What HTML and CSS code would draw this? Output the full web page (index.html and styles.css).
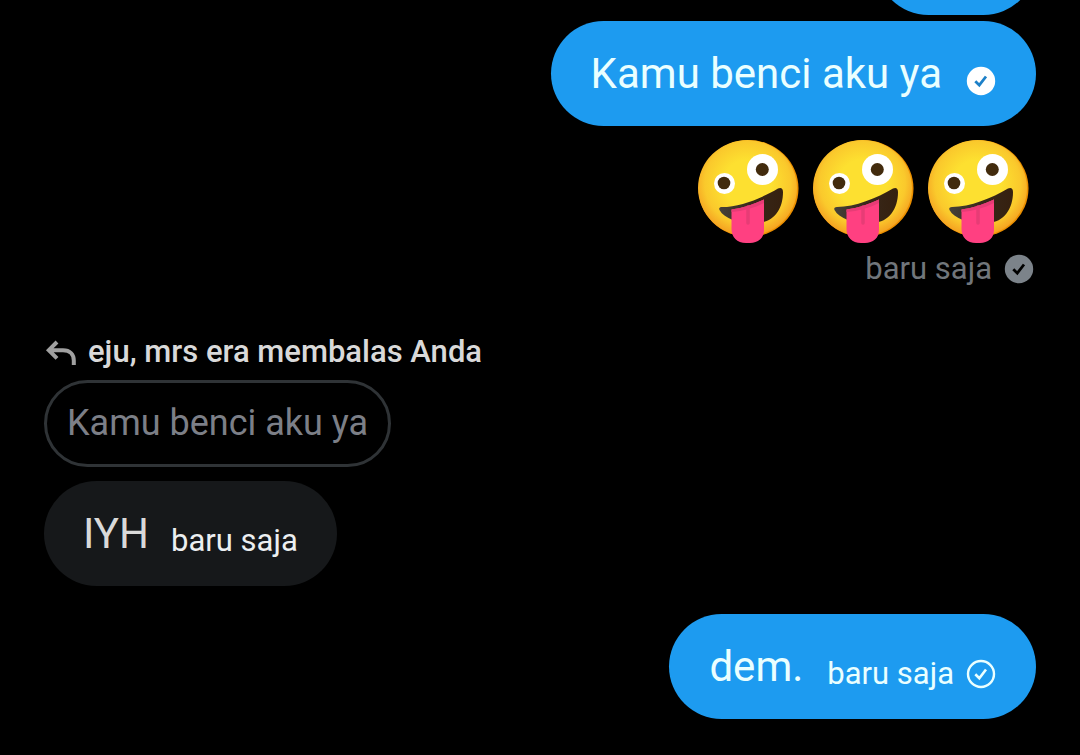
FILE: index.html
```html
<!DOCTYPE html>
<html lang="id">
<head>
<meta charset="utf-8">
<meta name="viewport" content="width=device-width, initial-scale=1">
<title>Pesan</title>
<link rel="stylesheet" href="styles.css">
</head>
<body>
<svg class="defs" aria-hidden="true">
  <defs>
    <radialGradient id="skin" cx="50%" cy="45%" r="54%">
      <stop offset="0.45" stop-color="#fde030"/>
      <stop offset="0.8" stop-color="#fac92c"/>
      <stop offset="1" stop-color="#f5a422"/>
    </radialGradient>
    <linearGradient id="mouth-fill" x1="0" x2="1">
      <stop offset="0" stop-color="#45413a"/>
      <stop offset="0.5" stop-color="#38281a"/>
      <stop offset="1" stop-color="#35200f"/>
    </linearGradient>
    <symbol id="zany" viewBox="0 0 101 103">
      <ellipse cx="50.5" cy="48.5" rx="50" ry="48.5" fill="#eb8f00"/>
      <ellipse cx="49.5" cy="48" rx="49.5" ry="48" fill="url(#skin)"/>
      <circle cx="26.5" cy="43.5" r="10.5" fill="#fff"/>
      <circle cx="26" cy="43" r="6.3" fill="#422b0d"/>
      <circle cx="64.5" cy="29.5" r="15.5" fill="#fff"/>
      <circle cx="64.3" cy="29.5" r="6.5" fill="#422b0d"/>
      <path d="M24 67C42 67 64 58 80 48.5C83 47 85 48.5 85 52C85 69 76 82 60 83C44 84 27 80 21.5 70C20.5 68 22 67 24 67Z" fill="url(#mouth-fill)"/>
      <path d="M33.5 69.5C45 68 56 64 66 59.5V90C66 98 60 103 52 103H48C39 103 33.5 97 33.5 89Z" fill="#ff4081"/>
      <path d="M33.5 69.5C45 68 56 64 66 59.5V63C56 68 45 71 33.5 72Z" fill="#e73c76"/>
      <path d="M50 67V83" stroke="#e73c76" stroke-width="3.5" stroke-linecap="round"/>
    </symbol>
  </defs>
</svg>
<main class="chat">
  <div class="cutoff"><div class="bubble sent short"></div></div>

  <div class="bubble sent">
    <p class="text">Kamu benci aku ya</p>
    <span class="meta"><svg class="tick" viewBox="0 0 30 30" role="img" aria-label="Terkirim"><circle cx="15" cy="15" r="14.2" fill="#fff"/><path d="M9.3 15.3L13.3 19.2L20 10.5" fill="none" stroke="#1d80c8" stroke-width="2.8"/></svg></span>
  </div>

  <div class="emojis" role="img" aria-label="Tiga wajah konyol">
    <svg class="emoji"><use href="#zany"/></svg>
    <svg class="emoji"><use href="#zany"/></svg>
    <svg class="emoji"><use href="#zany"/></svg>
  </div>
  <div class="status">
    <span>baru saja</span>
    <svg class="tick" viewBox="0 0 30 30" role="img" aria-label="Terkirim"><circle cx="15" cy="15" r="14.2" fill="#7c838a"/><path d="M9.3 15.3L13.3 19.2L20 10.5" fill="none" stroke="#000" stroke-width="2.8"/></svg>
  </div>

  <div class="reply-label">
    <svg class="arrow" viewBox="0 0 32 28" aria-hidden="true"><path d="M13 4L4.8 12.2L13 20.4M5 12.2H19C26 12.2 29.8 16.5 29.8 22.5V27" fill="none" stroke="#a0a0a0" stroke-width="4"/></svg>
    <span>eju, mrs era membalas Anda</span>
  </div>
  <blockquote class="quote">Kamu benci aku ya</blockquote>
  <div class="bubble received">
    <p class="text">IYH</p>
    <span class="meta">baru saja</span>
  </div>

  <div class="bubble sent last">
    <p class="text">dem.</p>
    <span class="meta">baru saja <svg class="tick" viewBox="0 0 30 30" role="img" aria-label="Mengirim"><circle cx="15" cy="15" r="13" fill="none" stroke="#eaffff" stroke-width="2.4"/><path d="M9.3 15.3L13.3 19.2L20 10.5" fill="none" stroke="#eaffff" stroke-width="2.6"/></svg></span>
  </div>
</main>
</body>
</html>
```

FILE: styles.css
```css
* { box-sizing: border-box; }
body {
  margin: 0;
  background: #000;
  color: #d9d9d9;
  font-family: Roboto, "Liberation Sans", sans-serif;
}
.defs { display: block; width: 0; height: 0; }
.chat {
  display: flex;
  flex-direction: column;
  align-items: flex-start;
  padding: 0 44px 36px;
}
.cutoff {
  align-self: flex-end;
  display: flex;
  align-items: flex-end;
  height: 15px;
  margin-bottom: 6px;
  overflow: hidden;
}
.bubble {
  display: flex;
  align-items: center;
  gap: 24px;
  min-height: 105px;
  padding: 0 40px;
  border-radius: 53px;
}
.short { width: 160px; flex: none; }
.sent { align-self: flex-end; background: #1d9bf0; color: #eaffff; }
.received { gap: 22px; margin-top: 14px; padding: 0 39px; background: #16181a; }
.text { margin: 0; font-size: 42px; line-height: 52px; }
.meta {
  display: flex;
  align-items: center;
  gap: 12px;
  padding-top: 14px;
  font-size: 31px;
  line-height: 40px;
}
.sent .meta { padding-top: 15px; }
.received .meta { color: #eceff1; }
.tick { display: block; width: 30px; height: 30px; }
.emojis {
  align-self: flex-end;
  display: flex;
  gap: 14px;
  margin-top: 14px;
  padding-right: 7px;
}
.emoji { display: block; width: 101px; height: 103px; }
.status {
  align-self: flex-end;
  display: flex;
  align-items: center;
  gap: 12px;
  margin-top: 6px;
  padding-right: 2px;
  color: #71767b;
  font-size: 31px;
  line-height: 40px;
}
.reply-label {
  display: flex;
  align-items: center;
  gap: 12px;
  margin-top: 43px;
  font-size: 31px;
  font-weight: 500;
  line-height: 40px;
}
.arrow { display: block; width: 32px; height: 28px; }
.quote {
  margin: 8px 0 0;
  padding: 14px 20px;
  border: 3px solid #2f3336;
  border-radius: 44px;
  color: #7c7f87;
  font-size: 36px;
  line-height: 53px;
}
.last { margin-top: 28px; }
```
